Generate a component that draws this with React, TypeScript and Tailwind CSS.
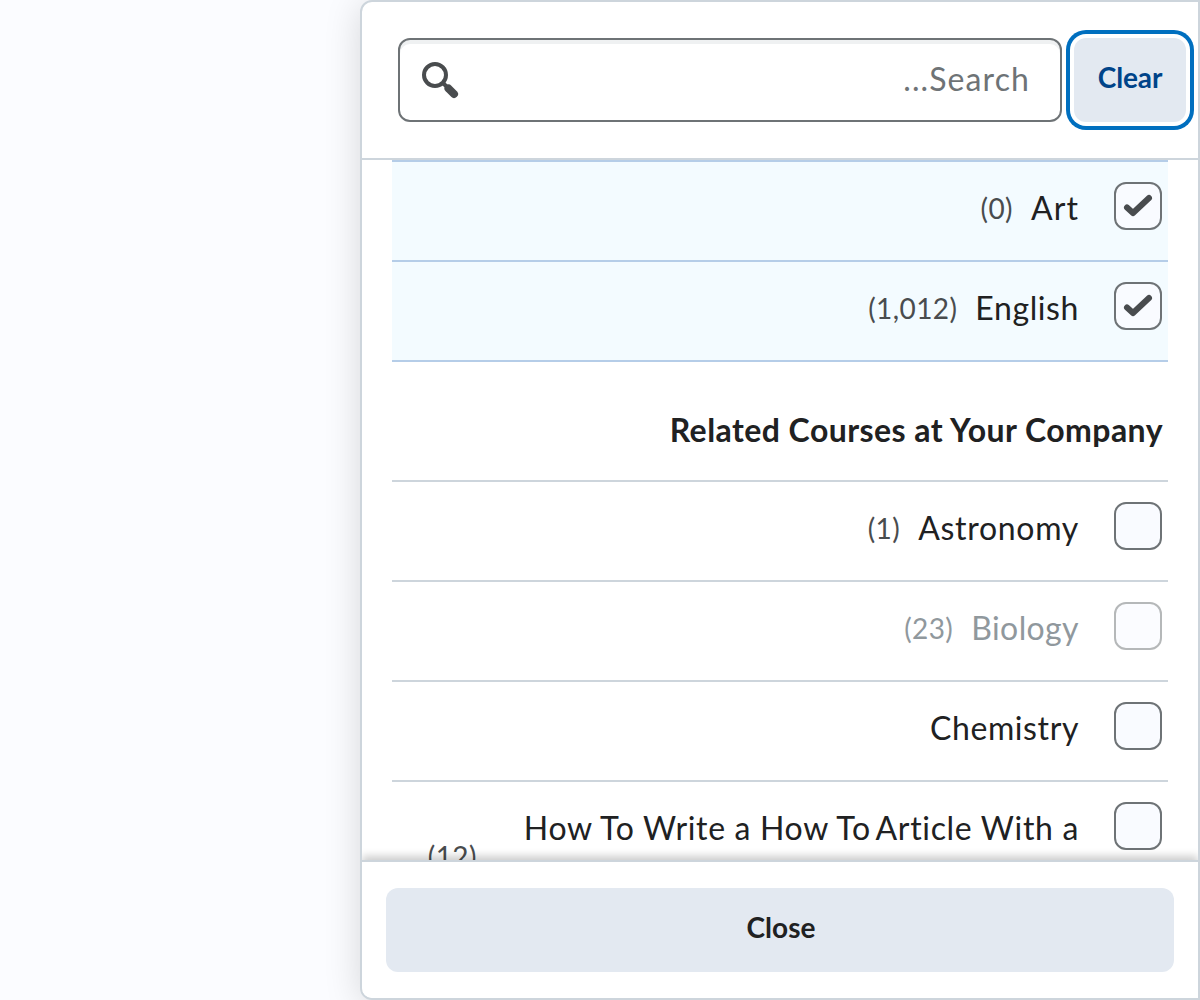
import React from "react";

type Item = { label: string; count?: string; checked?: boolean; disabled?: boolean; tracking: string };

const pinned: Item[] = [
  { label: "Art", count: "(0)", checked: true, tracking: "tracking-[1.1px]" },
  { label: "English", count: "(1,012)", checked: true, tracking: "tracking-[0.6px]" },
];

const related: Item[] = [
  { label: "Astronomy", count: "(1)", tracking: "tracking-[0.7px]" },
  { label: "Biology", count: "(23)", disabled: true, tracking: "tracking-[0.4px]" },
  { label: "Chemistry", tracking: "tracking-[0.6px]" },
];

function Checkbox({ checked, disabled }: { checked?: boolean; disabled?: boolean }) {
  return (
    <span
      className={`flex size-12 shrink-0 items-center justify-center rounded-xl border-2 border-[#6e7376] bg-[#f9fbff] ${disabled ? "opacity-50" : ""}`}
    >
      {checked && (
        <svg viewBox="0 0 44 44" className="size-11" fill="none">
          <path d="M11 23.5 L17 29 L33 14" stroke="#494c4e" strokeWidth="6" strokeLinecap="round" strokeLinejoin="round" />
        </svg>
      )}
    </span>
  );
}

function Row({ item, selected }: { item: Item; selected?: boolean }) {
  return (
    <li
      className={`flex h-[100px] shrink-0 items-start border-t-2 pt-5 pr-1.5 ${selected ? "border-[#b5cde8] bg-[#f3fbff]" : "border-[#cdd5dc]"}`}
    >
      <Checkbox checked={item.checked} disabled={item.disabled} />
      <span className={`mr-[35px] text-[32px] leading-[52px] ${item.tracking} ${item.disabled ? "text-[#90989d]" : "text-[#202122]"}`}>{item.label}</span>
      {item.count && (
        <span dir="ltr" className={`mr-[18px] text-[28px] leading-[52px] tracking-[0.4px] ${item.disabled ? "text-[#90989d]" : "text-[#494c4e]"}`}>{item.count}</span>
      )}
    </li>
  );
}

export default function App() {
  return (
    <div dir="rtl" className="flex h-[1000px] w-[1200px] overflow-hidden bg-[#fbfcff] font-['Lato',sans-serif] [text-rendering:optimizeLegibility]">
      <section className="flex h-[1000px] w-[840px] shrink-0 flex-col overflow-hidden rounded-l-xl border-2 border-[#cdd5dc] bg-white shadow-[0_4px_36px_rgba(0,0,0,0.15)]">
        <header className="flex h-[158px] shrink-0 items-start border-b-2 border-[#cdd5dc] pt-9 pr-3">
          <button className="h-[84px] w-[112px] shrink-0 rounded-xl bg-[#e3e9f1] pb-1.5 text-[28px] leading-9 font-bold tracking-[-0.1px] text-[#004489] shadow-[0_0_0_4px_#fff,0_0_0_8px_#006fbf]">
            Clear
          </button>
          <div className="mr-3 flex h-[84px] w-[664px] shrink-0 items-center justify-between rounded-xl border-2 border-[#6e7376] pr-[30px] pl-5 shadow-[inset_0_4px_0_0_#eff1f2]">
            <span className="pb-[3px] text-[32px] leading-10 tracking-[1.1px] text-[#6e7376]">Search...</span>
            <svg viewBox="0 0 40 40" className="size-10" fill="none">
              <circle cx="15" cy="15" r="11" stroke="#494c4e" strokeWidth="4" />
              <path d="M22.5 22.5 L27 27" stroke="#494c4e" strokeWidth="4" />
              <path d="M28.5 28.5 L34 34" stroke="#494c4e" strokeWidth="8" strokeLinecap="round" />
            </svg>
          </div>
        </header>
        <div className="relative flex min-h-0 flex-1 flex-col overflow-hidden px-[30px]">
          <ul className="shrink-0">
            {pinned.map((item) => (
              <Row key={item.label} item={item} selected />
            ))}
          </ul>
          <h2 className="h-[120px] shrink-0 border-t-2 border-[#b5cde8] pt-[42px] pr-[5px] text-[32px] leading-[52px] font-bold tracking-[0.45px] text-[#202122]">
            Related Courses at Your Company
          </h2>
          <ul className="shrink-0">
            {related.map((item) => (
              <Row key={item.label} item={item} />
            ))}
            <li className="flex items-start border-t-2 border-[#cdd5dc] pt-5 pr-1.5">
              <Checkbox />
              <span className="mr-[35px] text-[32px] leading-[52px] tracking-[0.67px] whitespace-nowrap text-[#202122]">
                How To Write a How To<span className="[word-spacing:-4px]"> </span>Article With a
              </span>
              <span dir="ltr" className="mr-[47px] pt-7 text-[28px] leading-[52px] tracking-[0.4px] text-[#494c4e]">(12)</span>
            </li>
          </ul>
        </div>
        <footer className="relative h-[138px] shrink-0 border-t-2 border-[#cdd5dc] bg-white px-6 pt-[26px] shadow-[0_-4px_8px_rgba(0,0,0,0.2)]">
          <button className="h-[84px] w-full rounded-xl bg-[#e3e9f1] pb-1.5 pl-0.5 text-[28px] leading-9 font-bold text-[#202122]">
            Close
          </button>
        </footer>
      </section>
    </div>
  );
}
